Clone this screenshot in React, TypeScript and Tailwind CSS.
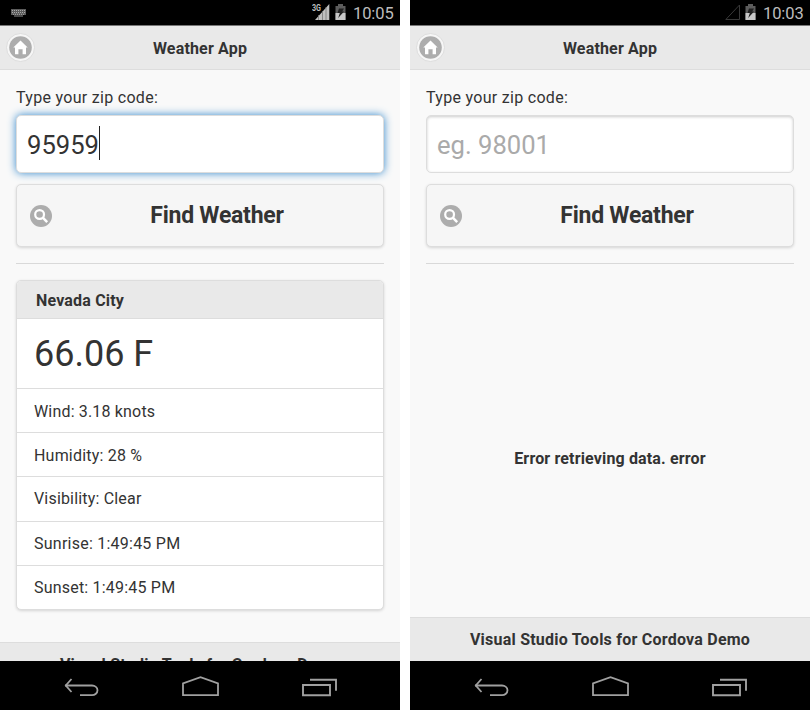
import React from "react";

function KeyboardIcon() {
  return (
    <svg className="ml-[11px] mt-[9px]" width="15" height="8" viewBox="0 0 15 8">
      <path d="M0 0h15v6h-15z" fill="#5c5c5c" />
      <path d="M1 1.5h13M1 3.5h13M2 5.3h11" stroke="#a8a8a8" strokeWidth="1" strokeDasharray="1 1" />
      <path d="M3 7h9" stroke="#8f8f8f" strokeWidth="1" />
    </svg>
  );
}

function SignalIcon({ online }: { online: boolean }) {
  if (!online) {
    return (
      <svg className="mt-[4px]" width="15" height="16" viewBox="0 0 15 16">
        <path d="M.8 15.5L14.5 1v14.5z" fill="none" stroke="#383838" strokeWidth="1" />
      </svg>
    );
  }
  return (
    <svg className="mt-[4px]" width="18" height="16" viewBox="0 0 18 16">
      <path d="M3 16L17.3 0V16z" fill="#bfbfbf" />
      <path d="M6.5 11v5M10.5 7v9M14 3v13" stroke="#777" strokeWidth=".8" />
      <path d="M0 0h9.5v8H0z" fill="#000" />
      <text x="0" y="7.4" fontSize="9" fontWeight="700" fontFamily="Roboto, sans-serif" textLength="9" lengthAdjust="spacingAndGlyphs" fill="#bdbdbd">3G</text>
    </svg>
  );
}

function BatteryIcon() {
  return (
    <svg className="ml-[5px] mt-[4px]" width="11" height="16" viewBox="0 0 11 16">
      <path d="M3 0h5v2h2.5v14H.5V2H3z" fill="#5c5c5c" />
      <path d="M.5 9h10v7H.5z" fill="#c8c8c8" />
      <path d="M4 4.5h5L7.2 7.5H9L3.2 14l1.6-5H2.5z" fill="#202020" />
    </svg>
  );
}

function StatusBar({ time, online }: { time: string; online: boolean }) {
  return (
    <div className="flex h-[25px] shrink-0 items-start bg-black text-[#bdbdbd]">
      {online && <KeyboardIcon />}
      <div className="ml-auto flex items-start pr-[7px]">
        <SignalIcon online={online} />
        <BatteryIcon />
        <span className="ml-[7px] mt-[3px] w-[40px] whitespace-nowrap text-[16.5px] leading-[21px] tracking-[-0.1px]">{time}</span>
      </div>
    </div>
  );
}

function Header() {
  return (
    <header className="grid h-[45px] shrink-0 grid-cols-[1fr_auto_1fr] items-center border-y border-t-[#777] border-b-[#dddddd] bg-[#e9e9e9]">
      <div className="mb-[1px] ml-[6px] flex h-[29px] w-[29px] items-center justify-center rounded-full border border-[#dddddd] bg-[#f6f6f6]">
        <svg width="23" height="23" viewBox="0 0 23 23">
          <circle cx="11.5" cy="11.5" r="11.3" fill="#adadad" />
          <path d="M11.5 4.5L18.7 11.4H17V18.3H13.6V13.3H9.4V18.3H6V11.4H4.3z" fill="#fff" />
        </svg>
      </div>
      <h1 className="pt-[2px] text-[16px] font-bold leading-[20px] tracking-[0.17px]">Weather App</h1>
    </header>
  );
}

function SearchForm({ value }: { value?: string }) {
  return (
    <section className="px-[16px] pt-[18px]">
      <div className="text-[16px] leading-[20px] tracking-[0.3px]">Type your zip code:</div>
      <div
        className={
          "mt-[7px] flex h-[58px] items-center rounded-[5px] border border-[#dddddd] bg-white pl-[11px] " +
          (value ? "shadow-[0_0_9px_0_#3388cc]" : "shadow-[inset_0_1px_3px_rgba(0,0,0,0.2)]")
        }
      >
        {value ? (
          <>
            <span className="ml-[-1px] w-[72px] whitespace-nowrap pt-[1px] text-[25.6px] leading-[32px]">{value}</span>
            <span className="mb-[3px] h-[34px] w-[1px] bg-[#222]" />
          </>
        ) : (
          <span className="ml-[-1px] whitespace-nowrap pt-[1px] text-[25.6px] leading-[32px] text-[#aaaaaa]">eg. 98001</span>
        )}
      </div>
      <div className="mt-[11px] grid h-[63px] grid-cols-[60px_1fr_26px] items-center rounded-[5px] border border-[#dddddd] bg-[#f6f6f6] pb-[1px] shadow-[0_1px_3px_rgba(0,0,0,0.15)]">
        <svg className="ml-[13px] mt-[1px]" width="22" height="22" viewBox="0 0 22 22">
          <circle cx="11" cy="11" r="11" fill="#adadad" />
          <circle cx="9.6" cy="9.5" r="4.4" fill="none" stroke="#fff" strokeWidth="2.2" />
          <path d="M12.8 12.7L17.2 17.2" stroke="#fff" strokeWidth="2.5" />
        </svg>
        <span className="whitespace-nowrap pt-[2px] text-center text-[23px] font-bold leading-[30px] tracking-[-0.25px]">Find Weather</span>
      </div>
      <hr className="mt-[16px] h-px border-0 bg-[#d9d9d9]" />
    </section>
  );
}

const rows = [
  { text: "Wind: 3.18 knots", size: "h-[44px] tracking-[0.17px] pt-[2px]" },
  { text: "Humidity: 28 %", size: "h-[44px] tracking-[0.2px] pt-[2px]" },
  { text: "Visibility: Clear", size: "h-[45px] tracking-[0.18px]" },
  { text: "Sunrise: 1:49:45 PM", size: "h-[44px] tracking-[0.24px] pt-[1px]" },
  { text: "Sunset: 1:49:45 PM", size: "h-[44px] tracking-[0.2px]" },
];

function WeatherCard() {
  return (
    <section className="mx-[16px] mt-[16px] overflow-hidden rounded-[5px] border border-[#dddddd] bg-white shadow-[0_1px_3px_rgba(0,0,0,0.15)]">
      <h2 className="flex h-[38px] items-center border-b border-[#dddddd] bg-[#e9e9e9] pl-[19px] pt-[2px] text-[16px] font-bold tracking-[0.18px]">Nevada City</h2>
      <div className="flex h-[70px] items-center border-b border-[#dddddd] pl-[17px] text-[36px]">66.06 F</div>
      {rows.map((row) => (
        <div key={row.text} className={"flex items-center border-b border-[#dddddd] pl-[17px] text-[16px] last:h-[43px] last:border-b-0 " + row.size}>
          {row.text}
        </div>
      ))}
    </section>
  );
}

function Footer({ clipped }: { clipped?: boolean }) {
  return (
    <footer
      className={
        "mt-auto flex shrink-0 items-start justify-center overflow-hidden border-t border-[#dddddd] bg-[#e9e9e9] pt-[12px] text-[16px] font-bold leading-[20px] tracking-[0.23px] " +
        (clipped ? "h-[19px]" : "h-[44px]")
      }
    >
      <span className="whitespace-nowrap">Visual Studio Tools for Cordova Demo</span>
    </footer>
  );
}

function NavBar() {
  return (
    <nav className="flex h-[49px] shrink-0 items-start bg-black pl-[63px] pt-[14px]">
      <svg width="36" height="22" viewBox="0 0 36 22" fill="none" stroke="#a0a0a0" strokeWidth="1.8">
        <path d="M2 10.5H29C32 10.5 34.5 12.5 34.5 15.2S32 20.2 29 20.2H17" />
        <path d="M8.5 4L2.8 10.5L8.5 17" />
      </svg>
      <svg className="ml-[82px]" width="38" height="22" viewBox="0 0 38 22" fill="none" stroke="#a0a0a0" strokeWidth="1.8">
        <path d="M2 20.2V8.3L19.5 2.2L37 8.3V20.2z" />
      </svg>
      <svg className="ml-[82px]" width="38" height="22" viewBox="0 0 38 22" fill="none" stroke="#a0a0a0" strokeWidth="1.9">
        <path d="M2 10H29V20.3H2zM9 4.8H35V15.7" />
      </svg>
    </nav>
  );
}

function Phone({ time, value }: { time: string; value?: string }) {
  return (
    <div className="flex h-[710px] w-[400px] flex-col overflow-hidden bg-[#f9f9f9]">
      <StatusBar time={time} online={!!value} />
      <Header />
      <SearchForm value={value} />
      {value ? (
        <WeatherCard />
      ) : (
        <p className="mt-[185px] text-center text-[16px] font-bold leading-[20px] tracking-[0.15px]">Error retrieving data. error</p>
      )}
      <Footer clipped={!!value} />
      <NavBar />
    </div>
  );
}

export default function App() {
  return (
    <main className="flex h-[710px] w-[810px] gap-[10px] overflow-hidden bg-white font-[Roboto,sans-serif] text-[#333333]">
      <Phone time="10:05" value="95959" />
      <Phone time="10:03" />
    </main>
  );
}
